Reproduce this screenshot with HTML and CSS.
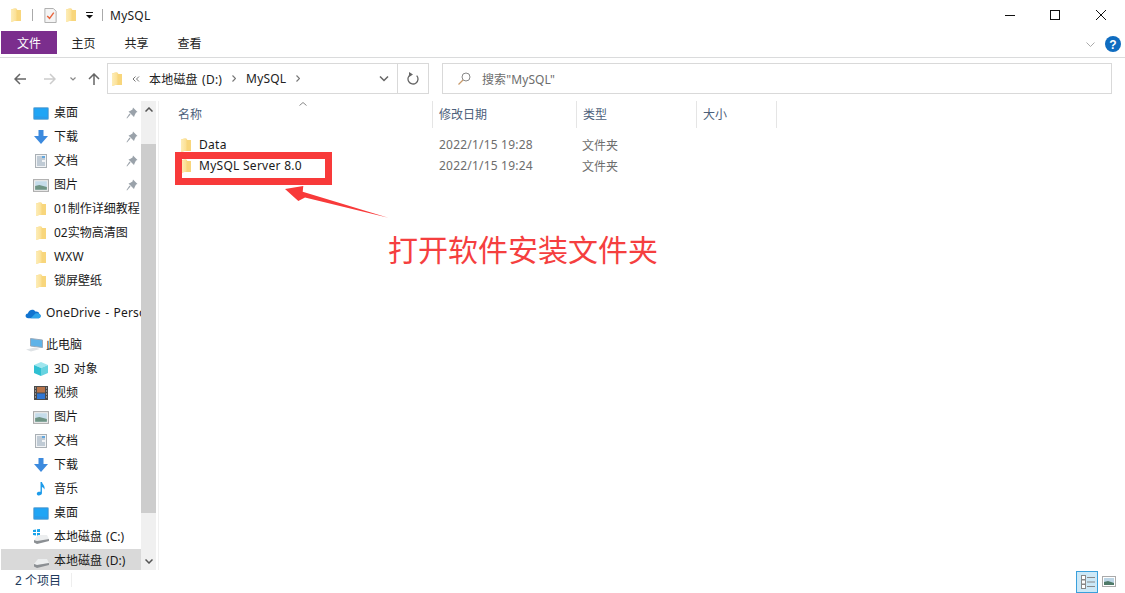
FILE: index.html
```html
<!DOCTYPE html>
<html lang="zh-CN">
<head>
<meta charset="utf-8">
<title>MySQL</title>
<link rel="stylesheet" href="styles.css">
</head>
<body>
<svg class="defs" width="0" height="0" aria-hidden="true">
  <defs>
    <linearGradient id="fg" x1="0" y1="0" x2="1" y2="0"><stop offset="0" stop-color="#fdedb8"/><stop offset="1" stop-color="#fbdf92"/></linearGradient>
    <symbol id="folder" viewBox="0 0 10 14"><path d="M0 1.500 L3 .5 H5 L6.500 2 H10 V13 H3 L0 14Z" fill="#f8d67c"/><path d="M0 1.500 L5.500 .5 V12.500 L0 14Z" fill="url(#fg)"/></symbol>
    <symbol id="pin" viewBox="0 0 12 12"><path d="M7 0.500 L11.500 5 L10 5.500 L8.500 8.500 L8 10 L2.500 4.500 L4 4 L6.500 2.500Z M4.500 7.500 L1 11.500 L0.500 11 L3.500 6.500Z" fill="#9aa2aa"/></symbol>
    <symbol id="desk" viewBox="0 0 16 13"><rect x="0.500" y="0.500" width="15" height="12" rx="1" fill="#2a9be8" stroke="#7fb7dc"/><path d="M2 2 H14 V10 L2 9Z" fill="#1fa5f5"/></symbol>
    <symbol id="down" viewBox="0 0 14 14"><path d="M4.500 0 H9.500 V6 H14 L7 14 L0 6 H4.500Z" fill="#3c8ade"/></symbol>
    <symbol id="doc" viewBox="0 0 12 14"><rect x="0.500" y="0.500" width="11" height="13" fill="#f1f3f5" stroke="#aab0b5"/><path d="M2 3 H7 M2 5 H10 M2 7 H7 M2 9 H10 M2 11 H10" stroke="#8fa3b5"/><rect x="7" y="2" width="3" height="2" fill="#64a7dd"/></symbol>
    <symbol id="pic" viewBox="0 0 15 12"><rect x="0.500" y="0.500" width="14" height="11" fill="#f2f2f2" stroke="#aaa"/><rect x="2" y="2" width="11" height="8" fill="#c5dcea"/><path d="M2 6.500 L6 5.500 L13 7.500 V10 H2Z" fill="#6f9484"/></symbol>
    <symbol id="cloud" viewBox="0 0 17 11"><path d="M3.500 10.500 C0 10.500 -0.500 6 3 5.500 C4 1 9.500 0 11 3.500 C14 3 15.500 5 15 6 C17.500 6.500 17 10.500 14.500 10.500Z" fill="#1174d0"/><path d="M6 10.500 L11 5.500 C13 5 15.500 5.500 15 6 C17.500 6.500 17 10.500 14.500 10.500Z" fill="#2ea3e8"/></symbol>
    <symbol id="pc" viewBox="0 0 17 14"><path d="M4.500 .5 L16.500 2 V9.500 L4.500 8Z" fill="#5fb3e8" stroke="#9ab"/><path d="M0 11.500 L9 9.500 L14 11 L5 13.500Z" fill="#dfe3e6"/></symbol>
    <symbol id="cube" viewBox="0 0 14 14"><path d="M7 0 L14 3 L7 6 L0 3Z" fill="#9fe6ee"/><path d="M0 3 L7 6 V14 L0 11Z" fill="#2fc0d2"/><path d="M14 3 L7 6 V14 L14 11Z" fill="#67d3e0"/></symbol>
    <symbol id="film" viewBox="0 0 14 14"><rect width="14" height="14" fill="#4b4b4b"/><rect x="3" y="1" width="8" height="5.500" fill="#b8744a"/><rect x="3" y="7.500" width="8" height="5.500" fill="#2f76d4"/><path d="M1 2 H2 M1 5 H2 M1 8 H2 M1 11 H2 M12 2 H13 M12 5 H13 M12 8 H13 M12 11 H13" stroke="#ddd"/></symbol>
    <symbol id="note" viewBox="0 0 10 15"><path d="M4.500 0 H6 C6.500 3 10 4 8.500 8 C8 6 7 5.500 6 5.500 V12 C6 14.500 0.500 15.500 0.500 12.500 C0.500 10.500 3 10 4.500 10.500Z" fill="#1c9bea"/></symbol>
    <symbol id="drive" viewBox="0 0 15 9"><path d="M4 0 H13 L15 4 L3 6 L0 5Z" fill="#eceeef"/><path d="M0 5 L3 6 L15 4 V6 L3 9 L0 7.500Z" fill="#8b8f93"/></symbol>
    <symbol id="win" viewBox="0 0 7 7"><path d="M0 1 L3 .5 V3 H0Z M4 .3 L7 0 V3 H4Z M0 4 H3 V6.500 L0 6Z M4 4 H7 V7 L4 6.700Z" fill="#19a3ea"/></symbol>
    <symbol id="cheL" viewBox="0 0 4 7"><path d="M.5 .5 L3.500 3.500 L.5 6.500" fill="none" stroke="#777" stroke-width="1.200"/></symbol>
  </defs>
</svg>

<div class="window">
  <header class="titlebar">
    <svg class="ico-folder q1"><use href="#folder"/></svg>
    <span class="qsep"></span>
    <svg class="qcheck" viewBox="0 0 13 16"><path d="M.5 .5 H9.500 L12.500 3.500 V15.500 H.5Z" fill="#f4f4f4" stroke="#aaa"/><path d="M3 8.500 L5.500 11 L10 5" fill="none" stroke="#e8643c" stroke-width="1.500"/></svg>
    <svg class="ico-folder q2"><use href="#folder"/></svg>
    <svg class="qdrop" viewBox="0 0 7 7"><path d="M0 0 H7 V1 H0Z M0 3 H7 L3.500 6.500Z" fill="#111"/></svg>
    <span class="qsep q3"></span>
    <span class="title">MySQL</span>
    <div class="winbtns">
      <svg class="winbtn winbtn-min" viewBox="0 0 45 30"><path d="M18 15.500 H28" stroke="#111"/></svg>
      <svg class="winbtn" viewBox="0 0 46 30"><rect x="18.500" y="10.500" width="9" height="9" fill="none" stroke="#111"/></svg>
      <svg class="winbtn" viewBox="0 0 46 30"><path d="M18 10 L28 20 M28 10 L18 20" stroke="#111"/></svg>
    </div>
  </header>

  <nav class="tabs">
    <span class="tab tab-file">文件</span>
    <span class="tab">主页</span>
    <span class="tab">共享</span>
    <span class="tab">查看</span>
    <svg class="rib-chev" viewBox="0 0 9 6"><path d="M.5 .5 L4.500 4.500 L8.500 .5" fill="none" stroke="#aaa"/></svg>
    <svg class="help" viewBox="0 0 16 16"><circle cx="8" cy="8" r="8" fill="#0f6cc0"/><text x="8" y="12.500" class="help-q">?</text></svg>
  </nav>

  <div class="addressrow">
    <div class="navbtns">
      <svg class="nav nav-back" viewBox="0 0 12 12"><path d="M12 6 H1.500 M6 1 L1 6 L6 11" fill="none" stroke="#666" stroke-width="1.500"/></svg>
      <svg class="nav nav-fwd" viewBox="0 0 12 12"><path d="M0 6 H10.500 M6 1 L11 6 L6 11" fill="none" stroke="#ccc" stroke-width="1.500"/></svg>
      <svg class="nav nav-drop" viewBox="0 0 6 4"><path d="M.5 .5 L3 3 L5.500 .5" fill="none" stroke="#888" stroke-width="1.200"/></svg>
      <svg class="nav nav-up" viewBox="0 0 12 12"><path d="M6 12 V1.500 M1 6 L6 1 L11 6" fill="none" stroke="#666" stroke-width="1.500"/></svg>
    </div>
    <div class="address">
      <svg class="ico-folder addr-folder"><use href="#folder"/></svg>
      <svg class="crumb-more" viewBox="0 0 8 6"><path d="M3.500 .5 L1 3 L3.500 5.500 M7 .5 L4.500 3 L7 5.500" fill="none" stroke="#777"/></svg>
      <span class="crumb">本地磁盘 (D:)</span>
      <svg class="sep-chev"><use href="#cheL"/></svg>
      <span class="crumb">MySQL</span>
      <svg class="sep-chev"><use href="#cheL"/></svg>
      <span class="addr-fill"></span>
      <span class="addr-btn"><svg class="addr-down" viewBox="0 0 10 6"><path d="M1 .5 L5 4.500 L9 .5" fill="none" stroke="#666" stroke-width="1.500"/></svg></span>
      <span class="addr-btn addr-refresh"><svg class="refresh" viewBox="0 0 12 13"><path d="M9 3 A5 5 0 1 1 3 3" transform="rotate(10 6 7)" fill="none" stroke="#666" stroke-width="1.300"/><path d="M2 0 L6 2.500 L2 5Z" fill="#666"/></svg></span>
    </div>
    <div class="search">
      <svg class="search-ico" viewBox="0 0 13 13"><circle cx="8" cy="5" r="4" fill="none" stroke="#888"/><path d="M5 8 L.5 12.500" stroke="#c89a6a" stroke-width="1.200"/></svg>
      <span class="search-text">搜索"MySQL"</span>
    </div>
  </div>

  <div class="main">
    <aside class="sidebar">
      <ul class="tree">
        <li class="row"><svg class="i i16"><use href="#desk"/></svg><span class="lbl">桌面</span><svg class="pin"><use href="#pin"/></svg></li>
        <li class="row"><svg class="i i14"><use href="#down"/></svg><span class="lbl">下载</span><svg class="pin"><use href="#pin"/></svg></li>
        <li class="row"><svg class="i i14"><use href="#doc"/></svg><span class="lbl">文档</span><svg class="pin"><use href="#pin"/></svg></li>
        <li class="row"><svg class="i i16"><use href="#pic"/></svg><span class="lbl">图片</span><svg class="pin"><use href="#pin"/></svg></li>
        <li class="row"><svg class="i i-f"><use href="#folder"/></svg><span class="lbl">01制作详细教程</span></li>
        <li class="row"><svg class="i i-f"><use href="#folder"/></svg><span class="lbl">02实物高清图</span></li>
        <li class="row"><svg class="i i-f"><use href="#folder"/></svg><span class="lbl lat">WXW</span></li>
        <li class="row"><svg class="i i-f"><use href="#folder"/></svg><span class="lbl">锁屏壁纸</span></li>
        <li class="row group"><svg class="i i16"><use href="#cloud"/></svg><span class="lbl lat">OneDrive - Personal</span></li>
        <li class="row group"><svg class="i i-pc"><use href="#pc"/></svg><span class="lbl">此电脑</span></li>
        <li class="row"><svg class="i i14"><use href="#cube"/></svg><span class="lbl">3D 对象</span></li>
        <li class="row"><svg class="i i14"><use href="#film"/></svg><span class="lbl">视频</span></li>
        <li class="row"><svg class="i i16"><use href="#pic"/></svg><span class="lbl">图片</span></li>
        <li class="row"><svg class="i i14"><use href="#doc"/></svg><span class="lbl">文档</span></li>
        <li class="row"><svg class="i i14"><use href="#down"/></svg><span class="lbl">下载</span></li>
        <li class="row"><svg class="i i14"><use href="#note"/></svg><span class="lbl">音乐</span></li>
        <li class="row"><svg class="i i16"><use href="#desk"/></svg><span class="lbl">桌面</span></li>
        <li class="row"><span class="i i16 drive-c"><svg class="drive-w"><use href="#win"/></svg><svg class="drive-d"><use href="#drive"/></svg></span><span class="lbl">本地磁盘 (C:)</span></li>
        <li class="row selected"><span class="i i16 drive-c"><svg class="drive-d"><use href="#drive"/></svg></span><span class="lbl">本地磁盘 (D:)</span></li>
      </ul>
    </aside>
    <div class="scrollbar">
      <span class="sb-btn"><svg viewBox="0 0 8 5" class="sb-arrow"><path d="M.5 4.500 L4 1 L7.500 4.500" fill="none" stroke="#555" stroke-width="1.500"/></svg></span>
      <span class="sb-thumb"></span>
      <span class="sb-fill"></span>
      <span class="sb-btn sb-btn-b"><svg viewBox="0 0 8 5" class="sb-arrow"><path d="M.5 .5 L4 4 L7.500 .5" fill="none" stroke="#555" stroke-width="1.500"/></svg></span>
    </div>
    <section class="content">
      <svg class="sort" viewBox="0 0 8 4"><path d="M.5 3.500 L4 .5 L7.500 3.500" fill="none" stroke="#888"/></svg>
      <div class="head">
        <span class="col col-name">名称</span>
        <span class="col col-date">修改日期</span>
        <span class="col col-type">类型</span>
        <span class="col col-size">大小</span>
      </div>
      <div class="files">
        <div class="file"><span class="col-name cell"><svg class="file-ico"><use href="#folder"/></svg><span class="fname">Data</span></span><span class="col-date cell dim">2022/1/15 19:28</span><span class="col-type cell dim">文件夹</span></div>
        <div class="file"><span class="col-name cell"><svg class="file-ico"><use href="#folder"/></svg><span class="fname">MySQL Server 8.0</span></span><span class="col-date cell dim">2022/1/15 19:24</span><span class="col-type cell dim">文件夹</span></div>
      </div>
    </section>
  </div>

  <footer class="status">
    <span class="count">2 个项目</span>
    <span class="status-sep"></span>
    <span class="views">
      <svg class="view view-on" viewBox="0 0 22 22"><rect x="0.500" y="0.500" width="21" height="21" fill="#cce8f7" stroke="#3aa0dc"/><rect x="5.500" y="4.500" width="4" height="4" fill="#fff" stroke="#888"/><rect x="5.500" y="9" width="4" height="4" fill="#fff" stroke="#888"/><rect x="5.500" y="13.500" width="4" height="4" fill="#fff" stroke="#888"/><path d="M11 6.500 H19 M11 11 H19 M11 15.500 H19" stroke="#888"/></svg>
      <svg class="view view-off" viewBox="0 0 14 11"><rect x="0.500" y="0.500" width="13" height="10" fill="#fff" stroke="#aaa"/><rect x="2" y="2" width="10" height="7" fill="#bcd5e5"/><path d="M2 6 L6 5 L12 7 V9 H2Z" fill="#4f7a68"/></svg>
    </span>
  </footer>

  <div class="mark-box"></div>
  <svg class="mark-arrow" viewBox="0 0 110 40"><path d="M1 3 L19.300 0 L18.700 5.700 L104.300 31.700 L21 11.500 L14.300 15Z" fill="#f83a3a"/></svg>
  <div class="mark-text">打开软件安装文件夹</div>
</div>
</body>
</html>
```
FILE: styles.css
```css
* { box-sizing: border-box; }
html, body { margin: 0; padding: 0; background: #fff; }
.defs { position: absolute; }
.window {
  position: relative;
  width: 1125px;
  height: 593px;
  overflow: hidden;
  display: flex;
  flex-direction: column;
  font-family: "Noto Sans", "Noto Sans CJK SC", sans-serif;
  font-size: 12px;
  color: #1a1a1a;
  background: #fff;
}

/* title bar */
.titlebar { height: 30px; flex: none; display: flex; align-items: center; padding-left: 11px; }
.ico-folder { width: 10px; height: 14px; flex: none; }
.qsep { width: 1px; height: 12px; background: #aaa; margin-left: 11px; }
.qcheck { width: 13px; height: 15px; margin-left: 11px; }
.q2 { margin-left: 9px; }
.qdrop { width: 7px; height: 7px; margin-left: 10px; }
.q3 { margin-left: 9px; }
.title { margin-left: 7px; letter-spacing: .25px; }
.winbtns { margin-left: auto; display: flex; margin-right: 1px; }
.winbtn { width: 46px; height: 30px; }
.winbtn-min { width: 45px; }

/* ribbon tabs */
.tabs { height: 28px; flex: none; display: flex; align-items: flex-start; padding: 1px 4px 0 1px; border-bottom: 1px solid #dadbdc; }
.tab { width: 53px; height: 23px; display: flex; align-items: center; justify-content: center; color: #222; }
.tab-file { width: 56px; background: #7b2e8d; color: #fff; }
.rib-chev { width: 9px; height: 6px; margin: 11px 0 0 auto; }
.help { width: 16px; height: 16px; margin: 5px 0 0 10px; }
.help-q { font: bold 12px "Liberation Sans", sans-serif; fill: #fff; text-anchor: middle; }

/* address row */
.addressrow { height: 43px; flex: none; display: flex; align-items: flex-start; padding-top: 5px; }
.navbtns { width: 107px; height: 31px; flex: none; display: flex; align-items: center; }
.nav { flex: none; }
.nav-back { width: 12px; height: 12px; margin-left: 14px; }
.nav-fwd { width: 12px; height: 12px; margin-left: 18px; }
.nav-drop { width: 6px; height: 4px; margin-left: 14px; }
.nav-up { width: 12px; height: 12px; margin-left: 12px; }
.address { width: 322px; height: 31px; flex: none; display: flex; align-items: center; border: 1px solid #d9d9d9; padding-left: 4px; }
.addr-folder { margin-right: 10px; }
.crumb-more { width: 8px; height: 6px; margin-right: 9px; flex: none; }
.crumb { color: #222; letter-spacing: .2px; word-spacing: 1px; white-space: nowrap; }
.sep-chev { width: 4px; height: 7px; margin: 0 10px; flex: none; }
.addr-fill { flex: 1; }
.addr-btn { width: 28px; height: 29px; display: flex; align-items: center; justify-content: center; border-right: 1px solid #d9d9d9; }
.addr-refresh { width: 30px; border-right: 0; }
.addr-down { width: 10px; height: 6px; }
.refresh { width: 12px; height: 13px; }
.search { width: 670px; height: 31px; flex: none; margin-left: 13px; display: flex; align-items: center; border: 1px solid #d9d9d9; padding-left: 15px; color: #6d6d6d; }
.search-ico { width: 13px; height: 13px; margin-right: 11px; }
.search-text { letter-spacing: .1px; }

/* main */
.main { flex: 1; min-height: 0; display: flex; }
.sidebar { width: 141px; flex: none; overflow: hidden; padding-left: 1px; }
.tree { list-style: none; margin: 0; padding: 0; }
.row { height: 24px; display: flex; align-items: center; white-space: nowrap; padding-left: 32px; position: relative; }
.row.group { padding-left: 24px; margin-top: 8px; }
.row.selected { background: #d9d9d9; }
.i { flex: none; display: block; }
.i16 { width: 16px; height: 13px; margin-right: 5px; }
.i14 { width: 14px; height: 14px; margin: 0 6px 0 1px; }
.i-f { width: 10px; height: 14px; margin: 0 8px 0 3px; }
.i-pc { width: 17px; height: 14px; margin: 0 3px 0 1px; }
.lbl { flex: none; word-spacing: 1px; margin-bottom: 2px; }
.lat { letter-spacing: .2px; }
.pin { width: 12px; height: 12px; position: absolute; left: 125px; top: 6px; }
.drive-c { position: relative; height: 16px; }
.drive-w { position: absolute; left: 0; top: 0; width: 7px; height: 7px; }
.drive-d { position: absolute; left: 1px; top: 6px; width: 15px; height: 9px; }

/* scrollbar */
.scrollbar { width: 15px; flex: none; display: flex; flex-direction: column; background: #f0f0f0; }
.sb-btn { height: 17px; flex: none; display: flex; align-items: center; justify-content: center; }
.sb-thumb { height: 369px; margin-top: 26px; flex: none; background: #cdcdcd; }
.sb-fill { flex: 1; }
.sb-arrow { width: 8px; height: 5px; }

/* file list */
.content { position: relative; flex: 1; min-width: 0; padding-left: 1px; border-left: 1px solid #f0f0f0; margin-left: 2px; }
.sort { position: absolute; left: 140px; top: 1px; width: 8px; height: 4px; }
.head { height: 27px; display: flex; color: #4c607a; }
.col { display: flex; align-items: center; padding: 0 0 2px 6px; border-right: 1px solid #e5e5e5; height: 27px; }
.head .col-name { width: 273px; padding-left: 18px; }
.head .col-date { width: 144px; }
.head .col-type { width: 120px; }
.head .col-size { width: 80px; }
.files { padding-top: 6px; }
.file { height: 21px; display: flex; align-items: center; }
.cell { display: flex; align-items: center; }
.file .col-name { width: 273px; padding-left: 21px; }
.file .col-date { width: 144px; padding-left: 6px; letter-spacing: .2px; }
.file .col-type { width: 120px; padding-left: 5px; }
.file-ico { width: 10px; height: 14px; margin-right: 8px; flex: none; }
.fname { color: #1a1a1a; letter-spacing: .27px; }
.dim { color: #6d6d6d; }

/* status bar */
.status { height: 23px; flex: none; display: flex; align-items: center; padding: 0 9px 0 15px; color: #1e395b; }
.count { margin-bottom: 4px; }
.status-sep { width: 1px; height: 14px; background: #eee; margin: 0 0 4px 10px; }
.views { margin-left: auto; display: flex; align-items: center; }
.view-on { width: 22px; height: 22px; }
.view-off { width: 14px; height: 11px; margin-left: 4px; }

/* annotation overlay */
.mark-box { position: absolute; left: 175px; top: 152px; width: 157px; height: 33px; border: 7px solid #f83a3a; }
.mark-arrow { position: absolute; left: 284px; top: 186px; width: 110px; height: 40px; }
.mark-text { position: absolute; left: 388px; top: 228px; font-size: 30px; line-height: 40px; color: #f53f3f; white-space: nowrap; font-family: "Noto Sans CJK SC", sans-serif; }
```
